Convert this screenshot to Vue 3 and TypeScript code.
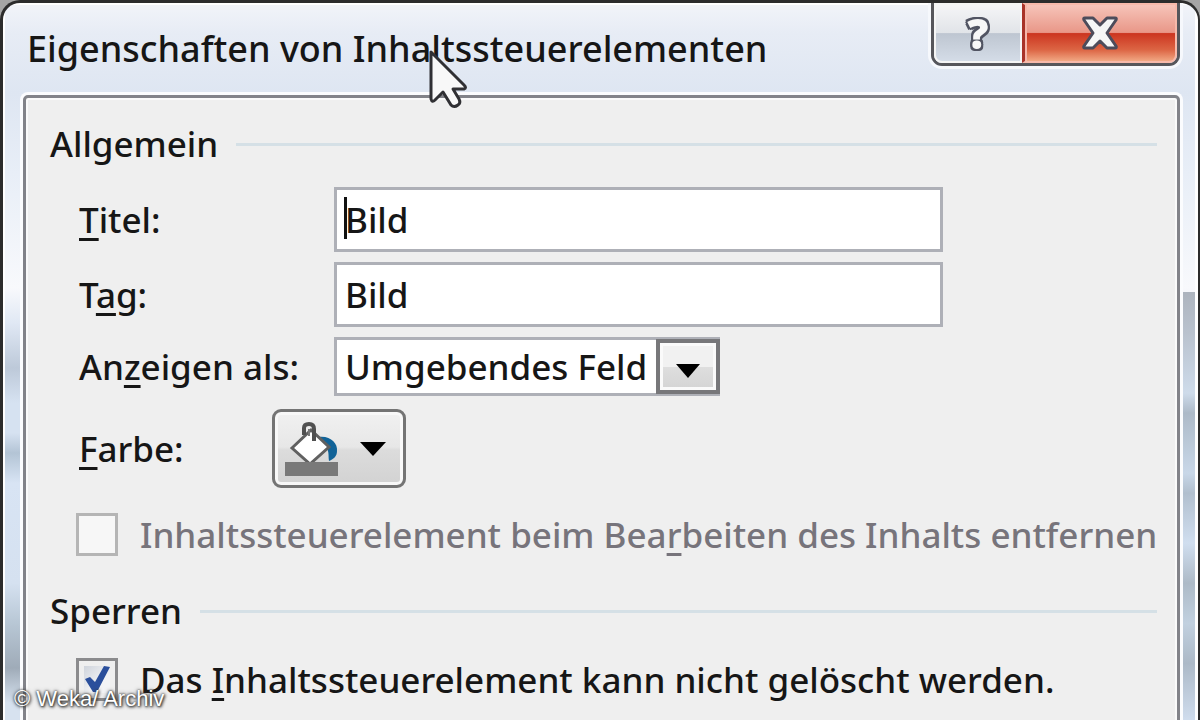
<script setup lang="ts">
import { ref } from 'vue'

const title = ref('Bild')
const tag = ref('Bild')
const display = ref('Umgebendes Feld')
const displayOptions = ['Umgebendes Feld', 'Start-/Endtag', 'Keine']
const removeOnEdit = ref(false)
const lockDelete = ref(true)
</script>

<template>
  <div class="desktop">
    <main class="window">
      <header class="titlebar">
        <h1>Eigenschaften von Inhaltssteuerelementen</h1>
        <div class="controls">
          <button type="button" class="help" aria-label="Hilfe"><span>?</span></button>
          <button type="button" class="close" aria-label="Schließen">
            <svg width="38" height="36" viewBox="0 0 38 36">
              <path d="M4 3H12L19 10L26 3H34Q36 3 35 5L26 18L35 31Q36 33 34 33H26L19 26L12 33H4Q2 33 3 31L12 18L3 5Q2 3 4 3Z" fill="#f6f6f6" stroke="#4d4c5b" stroke-width="3" stroke-linejoin="round" />
            </svg>
          </button>
        </div>
        <svg class="pointer" width="42" height="62" viewBox="0 0 42 62">
          <path d="M3 3V50Q4 54 7 51L15 43L23 56Q26 59 30 56Q33 54 31 50L25 40H36Q39 39 36 36Z" fill="#f8f8f8" stroke="#303034" stroke-width="3" stroke-linejoin="round" />
        </svg>
      </header>

      <form class="panel" @submit.prevent>
        <h2><span>Allgemein</span></h2>
        <div class="row text-row">
          <label for="title"><u>T</u>itel:</label>
          <div class="field">
            <input id="title" v-model="title" type="text" />
            <i class="caret"></i>
          </div>
        </div>
        <div class="row text-row">
          <label for="tag">T<u>a</u>g:</label>
          <div class="field"><input id="tag" v-model="tag" type="text" /></div>
        </div>
        <div class="row select-row">
          <label for="display">An<u>z</u>eigen als:</label>
          <div class="combo">
            <select id="display" v-model="display">
              <option v-for="option in displayOptions" :key="option">{{ option }}</option>
            </select>
            <span class="drop">
              <svg width="26" height="14" viewBox="0 0 26 14"><path d="M1 0H25L13 14Z" fill="#000" /></svg>
            </span>
          </div>
        </div>
        <div class="row color-row">
          <label for="color"><u>F</u>arbe:</label>
          <button id="color" type="button" class="color">
            <svg width="56" height="56" viewBox="0 0 56 56">
              <path d="M34 16C46 14 54 22 53 30C53 35 50 38 45 40C44 34 46 29 40 24Z" fill="#116398" />
              <path d="M8 27L27 9L45 26L26 43Z" fill="#fff" stroke="#606060" stroke-width="3" />
              <path d="M20 14V7Q20 3 25 3Q30 3 30 8V20" fill="none" stroke="#505050" stroke-width="4" />
              <path d="M25 8V15" stroke="#777" stroke-width="2" />
              <rect x="1" y="41" width="53" height="14" fill="#797979" />
            </svg>
            <svg width="26" height="14" viewBox="0 0 26 14"><path d="M0 0H26L13 14Z" fill="#000" /></svg>
          </button>
        </div>
        <div class="check disabled">
          <input id="remove" v-model="removeOnEdit" type="checkbox" disabled />
          <label for="remove">Inhaltssteuerelement beim Bea<u>r</u>beiten des Inhalts entfernen</label>
        </div>
        <h2><span>Sperren</span></h2>
        <div class="check">
          <input id="lock" v-model="lockDelete" type="checkbox" />
          <label for="lock">Das <u>I</u>nhaltssteuerelement kann nicht gelöscht werden.</label>
          <svg v-if="lockDelete" class="tick" width="28" height="30" viewBox="0 0 28 30">
            <path d="M2 15L7 13L12 18L21 2L27 3L14 28H10Z" fill="#2b4f9c" />
          </svg>
        </div>
      </form>
    </main>
    <small class="credit">© Weka/ Archiv</small>
  </div>
</template>

<style>
html,
body {
  margin: 0;
  overflow: hidden;
}
</style>

<style scoped>
* {
  box-sizing: border-box;
}

.desktop {
  position: relative;
  height: 100vh;
  overflow: hidden;
  background: #a5a5a5;
  font-family: "Noto Sans", "Open Sans", sans-serif;
  font-size: 35px;
  color: #161616;
}

.window {
  display: flex;
  flex-direction: column;
  height: 100%;
  padding: 0 18px 0 20px;
  overflow: hidden;
  border: 3px solid #2c2c2c;
  border-right-width: 2px;
  border-bottom: 0;
  border-radius: 20px 20px 0 0;
  background:
    linear-gradient(#fff, #fff) left / 2px 100% no-repeat,
    linear-gradient(#fff, #fff) right / 3px 100% no-repeat,
    linear-gradient(#fff, #fff) top / 100% 2px no-repeat,
    linear-gradient(transparent 0 289px, #adb4be 289px, #b9c2ce 330px, #cedbea 390px, #adbac8 410px, #c8d7e8 470px, #b1bfce 490px, #d0deef 540px, #adbac7 580px, #c1d0df 620px, #acb9c7 660px, #d1deef 720px) right / 17px 100% no-repeat,
    linear-gradient(#f2f4f9 0, #e7ecf5 30px, #dee6f2 90px, #e8eef7 170px, #f8f9fc 285px, #e0e8f4 320px, #bdc9d9 365px, #d6e2f1 400px, #d6e2f1 430px, #b3c4d5 450px, #d8e4f4 480px, #d5e1f0 580px, #b8c7d5 620px, #9fabb8 665px, #d7e2ef 700px);
}

.titlebar {
  position: relative;
  display: flex;
  flex: none;
  justify-content: space-between;
  align-items: flex-start;
  height: 92px;
  padding-left: 4px;
}

h1 {
  margin: 0;
  font-size: 36px;
  font-weight: 500;
  line-height: 92px;
  white-space: nowrap;
}

.controls {
  display: flex;
  height: 63px;
  border: 3px solid #56565b;
  border-top: 0;
  border-radius: 0 0 11px 11px;
  box-shadow: 0 0 0 3px #f6f8fc;
}

.controls button {
  display: flex;
  align-items: center;
  justify-content: center;
  padding: 0;
  border: 2px solid #f5f5f5;
}

.help {
  width: 88px;
  border-radius: 0 0 0 8px;
  background: linear-gradient(#f5f5f7, #e1e4e8 50%, #bec6d1 51%, #d4dce7);
  font: 700 40px/50px "Noto Sans", sans-serif;
  color: #f7f7f7;
}

.help span {
  -webkit-text-stroke: 2px #f7f7f7;
  filter: drop-shadow(2px 0 0 #515462) drop-shadow(-2px 0 0 #515462) drop-shadow(0 2px 0 #515462) drop-shadow(0 -2px 0 #515462);
}

.controls .close {
  width: 155px;
  border-color: #f7b9aa;
  border-left: 3px solid #a83328;
  border-radius: 0 0 8px 0;
  background: linear-gradient(#f6c4b9, #e99788 49%, #cc3520 51%, #dc6544 80%, #f1a783);
  box-shadow: inset 2px 0 #f5b7aa;
}

.pointer {
  position: absolute;
  left: 405px;
  top: 46px;
  z-index: 2;
}

.panel {
  flex: none;
  min-height: 700px;
  padding: 26px 20px 0 24px;
  border: 3px solid #828389;
  border-radius: 5px;
  background: #efefef;
  box-shadow: 0 0 0 3px #fbfcfe, inset 0 0 0 2px #fafafa;
}

h2 {
  display: flex;
  align-items: center;
  gap: 18px;
  margin: 0;
  height: 40px;
  font-size: 35px;
  font-weight: 500;
  line-height: 40px;
}

h2::after {
  content: "";
  flex: 1;
  height: 3px;
  background: #d5e0e6;
}

.row {
  display: flex;
  align-items: center;
  padding-left: 29px;
  margin-bottom: 10px;
}

.row label {
  width: 255px;
  white-space: nowrap;
}

label {
  font-weight: 500;
}

u {
  text-decoration-thickness: 3px;
  text-underline-offset: 5px;
  text-decoration-skip-ink: none;
}

h2 + .row {
  margin-top: 23px;
}

.field {
  position: relative;
  flex: 1;
  margin-right: 214px;
}

.field input,
select {
  display: block;
  width: 100%;
  height: 65px;
  padding: 0 8px;
  border: 3px solid #aeb0b7;
  border-radius: 0;
  outline: 0;
  background: #fff;
  color: inherit;
  font: inherit;
  font-weight: 500;
}

.caret {
  position: absolute;
  left: 10px;
  top: 10px;
  width: 3px;
  height: 42px;
  background: #111;
}

.combo {
  position: relative;
  width: 386px;
}

select {
  height: 59px;
  appearance: none;
}

.drop {
  position: absolute;
  top: 2px;
  right: 0;
  display: flex;
  align-items: center;
  justify-content: center;
  width: 64px;
  height: 55px;
  padding-top: 8px;
  border: 4px solid #77777a;
  background: linear-gradient(#f1f1f1 50%, #dedede 51%, #d4d4d4);
  box-shadow: inset 0 0 0 3px #fafafa;
  pointer-events: none;
}

.select-row {
  margin-bottom: 13px;
}

.color-row {
  margin-bottom: 25px;
}

.color-row label {
  width: 193px;
}

.color {
  display: flex;
  align-items: center;
  gap: 20px;
  width: 134px;
  height: 79px;
  padding: 0 9px;
  border: 3px solid #747474;
  border-radius: 9px;
  background: linear-gradient(#f1f1f1, #e7e7e7 48%, #dcdcdc 52%, #d2d2d2);
  box-shadow: inset 0 0 0 3px #f8f8f8;
}

.check {
  position: relative;
  display: flex;
  align-items: center;
  gap: 22px;
  height: 43px;
  padding-left: 26px;
}

.check input {
  flex: none;
  appearance: none;
  width: 42px;
  height: 43px;
  margin: 0;
  border: 3px solid #8b8b8d;
  background: linear-gradient(135deg, #c4cad4, #f3f4f6 60%);
  background-clip: content-box;
  padding: 5px;
}

.check label {
  white-space: nowrap;
}

.check.disabled {
  margin-bottom: 35px;
  color: #77747b;
}

.check.disabled input {
  border-color: #b5b5b5;
  background: #f7f7f7;
}

.tick {
  position: absolute;
  left: 33px;
  top: 6px;
  pointer-events: none;
}

h2 + .check {
  margin-top: 27px;
}

.credit {
  position: absolute;
  left: 14px;
  bottom: 8px;
  z-index: 3;
  font: 22px/26px "Liberation Sans", sans-serif;
  color: #fff;
  text-shadow: 0 0 2px #333, 1px 1px 3px #222, 0 0 4px #555;
}
</style>
